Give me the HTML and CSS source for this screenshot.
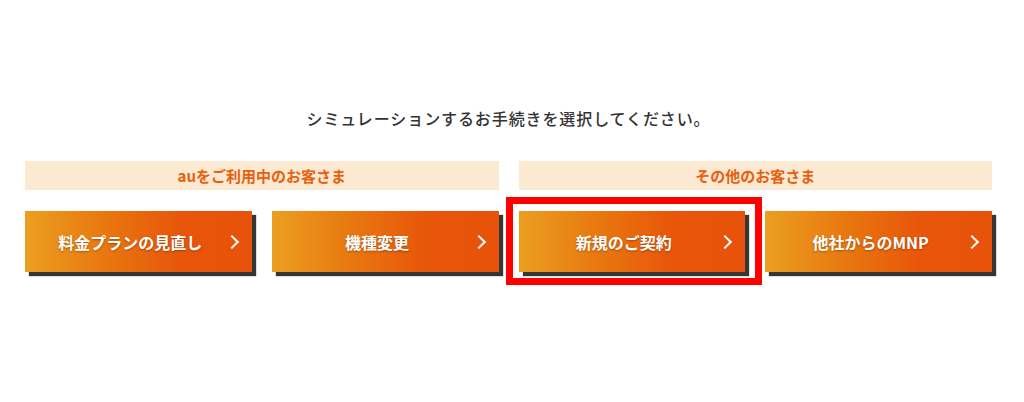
FILE: index.html
```html
<!DOCTYPE html>
<html lang="ja">
<head>
  <meta charset="UTF-8">
  <title>シミュレーション</title>
  <link rel="stylesheet" href="styles.css">
</head>
<body>
  <div class="sim">
    <!-- 見出し -->
    <p class="sim-title">シミュレーションするお手続きを選択してください。</p>

    <div class="groups">
      <div class="group">
        <div class="group-head">auをご利用中のお客さま</div>
        <div class="buttons">
          <a class="btn" href="#">料金プランの見直し</a>
          <a class="btn" href="#">機種変更</a>
        </div>
      </div>

      <div class="group">
        <div class="group-head">その他のお客さま</div>
        <div class="buttons">
          <a class="btn btn-marked" href="#">新規のご契約</a>
          <a class="btn" href="#">他社からのMNP</a>
        </div>
      </div>
    </div>
  </div>
</body>
</html>
```

FILE: styles.css
```css
html, body {
  margin: 0;
  background: #ffffff;
}

body {
  min-height: 100vh;
  font-family: "Noto Sans CJK JP", "Noto Sans", sans-serif;
  color: #333333;
}

.sim {
  width: 967px;
  margin-left: 25px;
  padding-top: 106px;
  padding-bottom: 60px;
}

.sim-title {
  margin: 0;
  font-size: 16px;
  font-weight: 500;
  line-height: 24px;
  letter-spacing: 0.9px;
  text-align: center;
  color: #333333;
}

.groups {
  display: flex;
  gap: 20px;
  margin-top: 31px;
}

.group {
  flex: 1;
  display: flex;
  flex-direction: column;
  gap: 21px;
}

.group-head {
  height: 29px;
  line-height: 29px;
  background: #fbe9d2;
  color: #e8600e;
  font-size: 15px;
  font-weight: bold;
  text-align: center;
}

.buttons {
  display: flex;
  gap: 20px;
}

.btn {
  flex: 1;
  position: relative;
  display: flex;
  align-items: center;
  justify-content: center;
  height: 61px;
  padding-right: 16px;
  background: linear-gradient(90deg, #eb9f21 0%, #e8780f 35%, #e8560a 68%, #e8520a 100%);
  box-shadow: 4px 4px 1px #363636;
  color: #ffffff;
  font-size: 16px;
  font-weight: bold;
  text-decoration: none;
  text-shadow: 0 1px 2px rgba(80, 30, 0, 0.45);
}

.btn::after {
  content: '';
  position: absolute;
  right: 15px;
  top: 50%;
  width: 8px;
  height: 8px;
  margin-top: -5px;
  border-top: 2px solid #ffffff;
  border-right: 2px solid #ffffff;
  transform: rotate(45deg);
}

.btn-marked::before {
  content: '';
  position: absolute;
  top: -14px;
  left: -13px;
  right: -17px;
  bottom: -13px;
  border: 7px solid #ff0000;
}
```
